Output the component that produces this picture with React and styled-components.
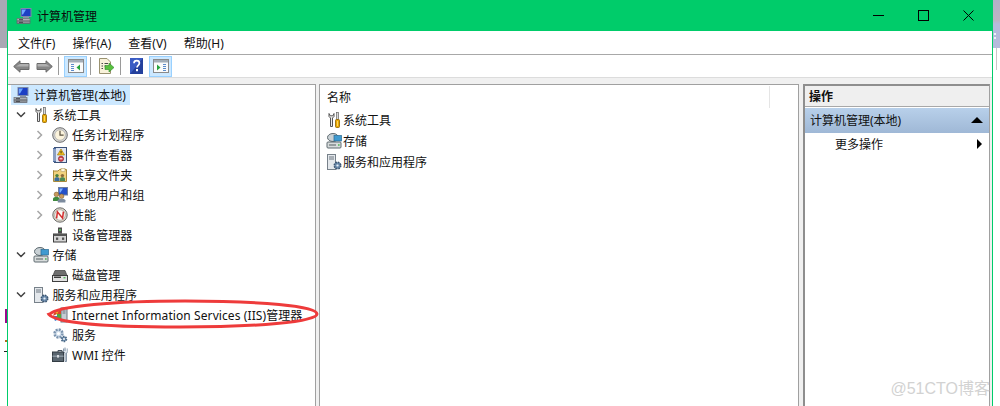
import React from "react";
import styled, { createGlobalStyle } from "styled-components";

const GlobalStyle = createGlobalStyle`
  html, body {
    margin: 0;
    padding: 0;
    height: 100%;
    background: #fff;
    overflow: hidden;
  }
  body {
    font-family: "Noto Sans", "Noto Sans CJK SC", sans-serif;
    font-size: 12px;
    color: #111;
  }
`;

const Page = styled.div`
  position: relative;
  display: flex;
  width: 1000px;
  height: 406px;
  overflow: hidden;
`;

const LeftStrip = styled.div`
  width: 7px;
  flex: none;
  display: flex;
  flex-direction: column;
  align-items: flex-end;
`;

const DesktopLeft = styled.div`
  width: 100%;
  height: 48px;
  background: #a9a8b4;
  margin-bottom: 261px;
`;

const Mark = styled.div`
  width: ${({ $w }) => $w}px;
  height: ${({ $h }) => $h}px;
  background: ${({ $c }) => $c};
  margin-bottom: ${({ $mb }) => $mb}px;
`;

const RightStrip = styled.div`
  width: 7px;
  flex: none;
`;

const DesktopRight = styled.div`
  height: 48px;
  box-sizing: border-box;
  padding: 33px 0 0 1px;
  display: flex;
  flex-direction: column;
  gap: 2px;
  background: linear-gradient(#b3b0c8 0, #bdb4c4 20px, #b6bbdc 24px);
`;

const Speck = styled.div`
  width: 2px;
  height: 2px;
  background: #eef0f8;
`;

const StripLine = styled.div`
  width: 1px;
  height: 22px;
  margin-left: 3px;
  background: #c8c8c8;
`;

const Window = styled.div`
  width: 986px;
  flex: none;
  box-sizing: border-box;
  border-left: 1px solid #00cc6a;
  border-right: 1px solid #00cc6a;
  display: flex;
  flex-direction: column;
  height: 406px;
  background: #fff;
`;

const TitleBar = styled.div`
  height: 31px;
  flex: none;
  margin: 0 -1px;
  background: #00cc6a;
  display: flex;
  align-items: center;
  padding-left: 9px;
  gap: 5px;
  color: #0a0a0a;
`;

const WinButtons = styled.div`
  margin-left: auto;
  margin-right: 2px;
  display: flex;
  align-items: center;
`;

const WinButton = styled.div`
  width: 45px;
  height: 31px;
  display: flex;
  align-items: center;
  justify-content: center;
`;

const MenuBar = styled.div`
  height: 23px;
  flex: none;
  display: flex;
  align-items: center;
  gap: 17px;
  padding-left: 10px;
  border-bottom: 1px solid #a8a8a8;
`;

const ToolBar = styled.div`
  height: 22px;
  flex: none;
  display: flex;
  align-items: center;
  padding-left: 5px;
  border-bottom: 1px solid #dcdcdc;
`;

const ToolIcon = styled.div`
  width: ${({ $w }) => $w || 16}px;
  height: 22px;
  margin-left: ${({ $ml }) => $ml || 0}px;
  display: flex;
  align-items: center;
  justify-content: center;
`;

const ToolSep = styled.div`
  width: 1px;
  height: 18px;
  background: #9a9a9a;
  margin-left: ${({ $ml }) => $ml}px;
`;

const ToolToggle = styled.div`
  width: 23px;
  height: 21px;
  box-sizing: border-box;
  margin-left: ${({ $ml }) => $ml}px;
  background: #cce8ff;
  border: 1px solid #99d1ff;
  display: flex;
  align-items: center;
  justify-content: center;
`;

const Panels = styled.div`
  flex: 1;
  min-height: 0;
  display: grid;
  grid-template-columns: 308px 480px 188px;
  column-gap: 3px;
  padding-top: 6px;
  background: #f0f0f0;
  align-items: stretch;
`;

const TreePanel = styled.div`
  background: #fff;
  border-top: 1px solid #a0a0a0;
  border-right: 1px solid #a0a0a0;
  padding: 0 0 0 3px;
`;

const TreeRow = styled.div`
  height: 20px;
  width: fit-content;
  display: flex;
  align-items: center;
  padding-left: ${({ $level }) => 2 + $level * 19.5}px;
  padding-right: 4px;
  letter-spacing: 0.09px;
  background: ${({ $selected }) => ($selected ? "#cce8ff" : "transparent")};
  white-space: nowrap;
`;

const Twisty = styled.div`
  width: 16px;
  height: 16px;
  margin-left: -20px;
  margin-right: 4px;
  display: flex;
  align-items: center;
  justify-content: center;
`;

const RowIcon = styled.div`
  width: 16px;
  height: 16px;
  flex: none;
  margin-right: ${({ $level }) => ($level === 0 ? 5 : 4)}px;
`;

const CenterPanel = styled.div`
  background: #fff;
  border: 1px solid #a0a0a0;
  border-bottom: 0;
`;

const ListHeader = styled.div`
  height: 24px;
  display: flex;
  align-items: center;
  padding-left: 7px;
  position: relative;
`;

const HeaderRule = styled.div`
  width: 1px;
  height: 22px;
  background: #e5e5e5;
  margin-left: auto;
  margin-right: 28px;
`;

const ListRows = styled.div`
  padding: 0 0 0 6px;
`;

const ListRow = styled.div`
  height: 21px;
  display: flex;
  align-items: center;
  gap: 1px;
`;

const ActionPanel = styled.div`
  margin-left: 1px;
  background: #fff;
  border-top: 2px solid #8e8e8e;
  border-left: 2px solid #8e8e8e;
  border-right: 1px solid #a0a0a0;
`;

const ActionHeader = styled.div`
  height: 20px;
  background: #efefef;
  border-bottom: 1px solid #a8a8a8;
  margin-bottom: 1px;
  display: flex;
  align-items: center;
  padding-left: 4px;
  font-weight: 700;
`;

const ActionGroup = styled.div`
  height: 25px;
  box-sizing: border-box;
  background: linear-gradient(#b8d0ea, #9fb8d6);
  display: flex;
  align-items: center;
  justify-content: space-between;
  padding: 0 6px 2px 5px;
`;

const ActionItem = styled.div`
  height: 22px;
  display: flex;
  align-items: center;
  justify-content: space-between;
  padding: 0 7px 0 30px;
`;

const UpArrow = styled.div`
  width: 0;
  height: 0;
  border-left: 6px solid transparent;
  border-right: 6px solid transparent;
  border-bottom: 6px solid #000;
`;

const RightArrow = styled.div`
  width: 0;
  height: 0;
  border-top: 5px solid transparent;
  border-bottom: 5px solid transparent;
  border-left: 5px solid #000;
`;

const Watermark = styled.div`
  position: absolute;
  right: 10px;
  bottom: 7px;
  font-family: "Liberation Sans", "Noto Sans CJK SC", sans-serif;
  font-size: 16px;
  line-height: 20px;
  color: #d2d2d2;
`;

const Ring = styled.svg`
  position: absolute;
  left: 45px;
  top: 297px;
  pointer-events: none;
`;

const Ico = ({ w = 16, h = 16, children }) => (
  <svg width={w} height={h} viewBox={`0 0 ${w} ${h}`} style={{ display: "block" }}>
    {children}
  </svg>
);

const ComputerIcon = () => (
  <Ico>
    <rect x="5" y="0.5" width="10" height="8" fill="#1c3fc4" stroke="#7c8aa8" />
    <path d="M6 1.5h4l-3 5H6z" fill="#6fa8ff" />
    <rect x="7" y="9" width="6" height="1.5" fill="#8a94a6" />
    <rect x="1" y="10.5" width="13" height="2.5" fill="#aeb2b8" stroke="#6c7077" strokeWidth="0.7" />
    <rect x="1" y="13" width="13" height="2.5" fill="#8d9197" stroke="#5e6268" strokeWidth="0.7" />
    <rect x="3" y="11.2" width="4" height="1" fill="#3f4348" />
    <rect x="3" y="13.8" width="4" height="1" fill="#3f4348" />
  </Ico>
);

const ToolsIcon = () => (
  <Ico>
    <path d="M3 1.5v3l1.5 1.5v8.5h2V6L8 4.5v-3L6.8 3.8H4.3z" fill="#e9e9e9" stroke="#555" strokeWidth="1" strokeLinejoin="round" />
    <rect x="10.5" y="0.5" width="2" height="7" fill="#d9d9d9" stroke="#666" strokeWidth="0.7" />
    <rect x="9.5" y="7.5" width="4" height="8" rx="1" fill="#e8a800" stroke="#8a5f00" strokeWidth="0.8" />
    <rect x="11" y="9" width="1" height="5" fill="#ffd860" />
  </Ico>
);

const ClockIcon = () => (
  <Ico>
    <circle cx="8" cy="8" r="7.3" fill="#d6d6d6" stroke="#6d6d6d" />
    <circle cx="8" cy="8" r="5.3" fill="#fbf3dc" stroke="#a8a8a8" strokeWidth="0.7" />
    <path d="M8 3.8V8.2H11.6" fill="none" stroke="#5a5240" strokeWidth="1.2" />
  </Ico>
);

const EventIcon = () => (
  <Ico>
    <rect x="2.5" y="0.5" width="12" height="15" fill="#dfe6f4" stroke="#3b5178" />
    <rect x="1" y="1" width="3" height="14" fill="#4f6c9e" />
    <path d="M1 3h3M1 5h3M1 7h3M1 9h3M1 11h3M1 13h3" stroke="#e8eef8" strokeWidth="0.8" />
    <path d="M9 2l3.6 6H5.4z" fill="#f4c21a" stroke="#96710a" strokeWidth="0.6" />
    <rect x="8.6" y="4" width="0.9" height="2.4" fill="#222" />
    <circle cx="9" cy="11.8" r="2.6" fill="#d8404c" stroke="#7c1c24" strokeWidth="0.6" />
    <path d="M7.6 11.8h2.8" stroke="#fff" strokeWidth="1" />
  </Ico>
);

const ShareIcon = () => (
  <Ico>
    <path d="M1.5 3.5V14.5H14.5V2.5H7.5L6 4H2z" fill="#f1d27d" stroke="#a88a3c" />
    <rect x="9" y="1.5" width="4" height="3" fill="#fdf6dc" stroke="#b9a468" strokeWidth="0.6" />
    <circle cx="5" cy="8.6" r="1.7" fill="#4b7f3c" />
    <path d="M2.5 14v-2.2c0-1 1-1.5 2.5-1.5s2.5.5 2.5 1.5V14z" fill="#3c6f9c" />
    <circle cx="10.4" cy="8.6" r="1.7" fill="#8c6b3a" />
    <path d="M8 14v-2.2c0-1 1-1.5 2.4-1.5s2.6.5 2.6 1.5V14z" fill="#4a8b55" />
  </Ico>
);

const UsersIcon = () => (
  <Ico>
    <rect x="6.5" y="0.5" width="9" height="7.5" fill="#2450c8" stroke="#6e7f9e" />
    <path d="M7.5 1.5h3.5l-2.5 4H7.5z" fill="#7fb2ff" />
    <circle cx="4.4" cy="7.4" r="2.3" fill="#c99a5c" stroke="#6e5127" strokeWidth="0.5" />
    <path d="M1 14v-2.4C1 10.5 2.4 10 4.4 10s3.2.5 3.2 1.6V14z" fill="#3f8a3e" />
    <circle cx="9.6" cy="9.2" r="2.3" fill="#c99a5c" stroke="#6e5127" strokeWidth="0.5" />
    <path d="M5.8 15.6v-2.3c0-1.1 1.6-1.6 3.8-1.6s3.8.5 3.8 1.6v2.3z" fill="#7c8b9e" />
  </Ico>
);

const PerfIcon = () => (
  <Ico>
    <circle cx="8" cy="8" r="7.2" fill="#ddd8c8" stroke="#6c6c6c" />
    <circle cx="8" cy="8" r="5.3" fill="#fbfaf4" stroke="#9c9c9c" strokeWidth="0.7" />
    <path d="M4.6 11.4L5.4 4.8L10.6 11.2L11.4 4.6" fill="none" stroke="#d22d2d" strokeWidth="1.5" />
  </Ico>
);

const DeviceIcon = () => (
  <Ico>
    <rect x="6" y="0.5" width="4" height="6" fill="#4d4d4d" />
    <rect x="7.2" y="2" width="1.6" height="2" fill="#58c060" />
    <rect x="1.5" y="7" width="13" height="8" fill="#d4d4d4" stroke="#3c3c3c" />
    <rect x="1.5" y="7" width="13" height="2" fill="#555" />
    <rect x="4" y="10.5" width="2.2" height="2.4" fill="#555" />
    <rect x="10" y="10.5" width="2.2" height="2.4" fill="#555" />
  </Ico>
);

const StorageIcon = () => (
  <Ico>
    <ellipse cx="7" cy="4.5" rx="5.5" ry="4" fill="#c8d0d4" stroke="#5e6a70" />
    <rect x="8" y="2.5" width="7.5" height="5.5" fill="#3f9ad0" stroke="#2a6a92" strokeWidth="0.7" />
    <rect x="1" y="9" width="14" height="6" rx="1" fill="#d8dcdc" stroke="#5e6a70" />
    <rect x="3" y="11.4" width="7" height="1.2" fill="#6a7478" />
    <rect x="12" y="11.2" width="1.6" height="1.6" fill="#54b85c" />
  </Ico>
);

const DiskIcon = () => (
  <Ico>
    <path d="M3 3.5H13L15 8.5H1z" fill="#6f6f6f" stroke="#3e3e3e" strokeWidth="0.7" />
    <rect x="0.5" y="8.5" width="15" height="6" fill="#e2e2e2" stroke="#3e3e3e" />
    <rect x="2" y="9.5" width="7" height="1.5" fill="#3e3e3e" />
    <rect x="11.5" y="10" width="2" height="1.4" fill="#58b860" />
  </Ico>
);

const ServerAppsIcon = () => (
  <Ico>
    <rect x="1.5" y="0.5" width="8" height="15" fill="#e4e8ec" stroke="#77818a" />
    <path d="M3 3h5M3 5h5" stroke="#6d7780" strokeWidth="1" />
    <circle cx="11.5" cy="11.5" r="3.2" fill="#6f8fb0" stroke="#3c5672" strokeWidth="1.6" strokeDasharray="1.6 0.9" />
    <circle cx="11.5" cy="11.5" r="1.1" fill="#e8f0f8" />
  </Ico>
);

const IisIcon = () => (
  <Ico>
    <rect x="9" y="1" width="6" height="14" fill="#c5ccd4" stroke="#6d7780" />
    <path d="M10.5 4h3M10.5 6h3" stroke="#6d7780" />
    <path d="M1 9a6 6 0 0 1 8-5v3H5z" fill="#d9482a" />
    <path d="M1 9h4v4l-2 1z" fill="#3a78cc" />
    <path d="M5 7h4v6H5z" fill="#55a63a" />
    <path d="M3 5l2 2 2-3z" fill="#e8b820" />
  </Ico>
);

const GearsIcon = () => (
  <Ico>
    <circle cx="6.5" cy="6.5" r="4" fill="#cfdcea" stroke="#7a93ae" strokeWidth="2.4" strokeDasharray="2 1.1" />
    <circle cx="6.5" cy="6.5" r="1.6" fill="#fff" />
    <circle cx="12" cy="12" r="2.4" fill="#6f8fb0" stroke="#4e6b88" strokeWidth="1.8" strokeDasharray="1.4 0.9" />
    <circle cx="12" cy="12" r="0.9" fill="#fff" />
  </Ico>
);

const WmiIcon = () => (
  <Ico>
    <path d="M6 5V3.5h4V5" fill="none" stroke="#44505c" />
    <rect x="0.5" y="5" width="11" height="9.5" fill="#5a6670" stroke="#333c44" />
    <rect x="0.5" y="8.5" width="11" height="1.5" fill="#8b97a2" />
    <rect x="5" y="8" width="2" height="2.6" fill="#d8dde2" />
    <path d="M13 0.5V4M11.5 1.5V4.5L13 6V14.5h1.5V6L16 4.5V1.5" fill="#dfe6ee" stroke="#6d8096" strokeWidth="0.8" />
  </Ico>
);

const ChevronRight = () => (
  <Ico w={8} h={10}>
    <path d="M1.5 1L5.5 5L1.5 9" fill="none" stroke="#a6a6a6" strokeWidth="1.5" />
  </Ico>
);

const ChevronDown = () => (
  <Ico w={10} h={8}>
    <path d="M1 1.5L5 5.5L9 1.5" fill="none" stroke="#404040" strokeWidth="1.5" />
  </Ico>
);

const ArrowLeft = () => (
  <Ico w={17} h={13}>
    <path d="M.7 6.5L7 .8V3.5H16V9.5H7v2.7z" fill="#868686" stroke="#6a6a6a" strokeLinejoin="round" />
    <path d="M7 4H15.5V6.5H3z" fill="#b0b0b0" />
  </Ico>
);

const ArrowRight = () => (
  <Ico w={17} h={13}>
    <path d="M16.3 6.5L10 .8V3.5H1V9.5h9v2.7z" fill="#868686" stroke="#6a6a6a" strokeLinejoin="round" />
    <path d="M10 4H1.5V6.5H14z" fill="#b0b0b0" />
  </Ico>
);

const PaneIcon = ({ side }) => (
  <Ico>
    <rect x="0.5" y="1.5" width="15" height="13" fill="#fbfbfb" stroke="#8a8a8a" />
    <rect x="1" y="2" width="14" height="2.5" fill="#a4aeb8" />
    {side === "left" ? (
      <>
        <path d="M3 6.5h3M3 8.5h3M3 10.5h3M3 12.5h3" stroke="#5b8ccc" />
        <path d="M12 6.5V12.5L8.5 9.5z" fill="#26a43c" />
      </>
    ) : (
      <>
        <path d="M10 6.5h3M10 8.5h3M10 10.5h3M10 12.5h3" stroke="#5b8ccc" />
        <path d="M4 6.5V12.5L7.5 9.5z" fill="#26a43c" />
      </>
    )}
  </Ico>
);

const ExportIcon = () => (
  <Ico>
    <path d="M1.5.5H9L12.5 4V15.5H1.5z" fill="#f8f2da" stroke="#9a9270" />
    <path d="M3.5 5.5H5M3.5 8H5M3.5 10.5H5M6.5 5.5H10M6.5 8H8" stroke="#4a4a4a" />
    <path d="M7 7.5h4V5l5 4.5-5 4.5v-2.5H7z" fill="#58c03e" stroke="#2e8a28" strokeWidth="0.6" />
  </Ico>
);

const HelpIcon = () => (
  <Ico w={13} h={16}>
    <rect width="13" height="16" fill="#24409c" />
    <path d="M0 0h13L0 16z" fill="#3a5cc4" />
    <path
      d="M4 5.2C4 3.4 5.2 2.6 6.7 2.6S9.4 3.5 9.4 5.1C9.4 7.3 7 7.4 7 9.6"
      fill="none"
      stroke="#fff"
      strokeWidth="1.7"
    />
    <rect x="6" y="11" width="2" height="2.2" fill="#fff" />
  </Ico>
);

const treeRows = [
  { level: 0, label: "计算机管理(本地)", Icon: ComputerIcon, selected: true },
  { level: 1, label: "系统工具", Icon: ToolsIcon, twisty: "down" },
  { level: 2, label: "任务计划程序", Icon: ClockIcon, twisty: "right" },
  { level: 2, label: "事件查看器", Icon: EventIcon, twisty: "right" },
  { level: 2, label: "共享文件夹", Icon: ShareIcon, twisty: "right" },
  { level: 2, label: "本地用户和组", Icon: UsersIcon, twisty: "right" },
  { level: 2, label: "性能", Icon: PerfIcon, twisty: "right" },
  { level: 2, label: "设备管理器", Icon: DeviceIcon },
  { level: 1, label: "存储", Icon: StorageIcon, twisty: "down" },
  { level: 2, label: "磁盘管理", Icon: DiskIcon },
  { level: 1, label: "服务和应用程序", Icon: ServerAppsIcon, twisty: "down" },
  { level: 2, label: "Internet Information Services (IIS)管理器", Icon: IisIcon },
  { level: 2, label: "服务", Icon: GearsIcon },
  { level: 2, label: "WMI 控件", Icon: WmiIcon },
];

const listRows = [
  { label: "系统工具", Icon: ToolsIcon },
  { label: "存储", Icon: StorageIcon },
  { label: "服务和应用程序", Icon: ServerAppsIcon },
];

const menus = ["文件(F)", "操作(A)", "查看(V)", "帮助(H)"];

function App() {
  return (
    <Page>
      <GlobalStyle />
      <LeftStrip>
        <DesktopLeft />
        <Mark $w={2} $h={14} $c="#9a0a8a" $mb={17} />
        <Mark $w={2} $h={2} $c="#b06a20" $mb={9} />
        <Mark $w={3} $h={1} $c="#222" $mb={0} />
      </LeftStrip>

      <Window>
        <TitleBar>
          <ComputerIcon />
          计算机管理
          <WinButtons>
            <WinButton>
              <Ico w={11} h={11}>
                <path d="M0 5.5H11" stroke="#000" />
              </Ico>
            </WinButton>
            <WinButton>
              <Ico w={11} h={11}>
                <rect x="0.5" y="0.5" width="10" height="10" fill="none" stroke="#000" />
              </Ico>
            </WinButton>
            <WinButton>
              <Ico w={11} h={11}>
                <path d="M.5.5L10.5 10.5M10.5.5L.5 10.5" stroke="#000" />
              </Ico>
            </WinButton>
          </WinButtons>
        </TitleBar>

        <MenuBar>
          {menus.map((m) => (
            <span key={m}>{m}</span>
          ))}
        </MenuBar>

        <ToolBar>
          <ToolIcon $w={17}>
            <ArrowLeft />
          </ToolIcon>
          <ToolIcon $w={17} $ml={6}>
            <ArrowRight />
          </ToolIcon>
          <ToolSep $ml={5} />
          <ToolToggle $ml={5}>
            <PaneIcon side="left" />
          </ToolToggle>
          <ToolSep $ml={3} />
          <ToolIcon $ml={7}>
            <ExportIcon />
          </ToolIcon>
          <ToolSep $ml={6} />
          <ToolIcon $w={13} $ml={9}>
            <HelpIcon />
          </ToolIcon>
          <ToolToggle $ml={6}>
            <PaneIcon side="right" />
          </ToolToggle>
        </ToolBar>

        <Panels>
          <TreePanel>
            {treeRows.map(({ level, label, Icon, selected, twisty }) => (
              <TreeRow key={label} $level={level} $selected={selected}>
                {level > 0 && (
                  <Twisty>
                    {twisty === "down" && <ChevronDown />}
                    {twisty === "right" && <ChevronRight />}
                  </Twisty>
                )}
                <RowIcon $level={level}>
                  <Icon />
                </RowIcon>
                <span>{label}</span>
              </TreeRow>
            ))}
          </TreePanel>

          <CenterPanel>
            <ListHeader>
              名称
              <HeaderRule />
            </ListHeader>
            <ListRows>
              {listRows.map(({ label, Icon }) => (
                <ListRow key={label}>
                  <Icon />
                  <span>{label}</span>
                </ListRow>
              ))}
            </ListRows>
          </CenterPanel>

          <ActionPanel>
            <ActionHeader>操作</ActionHeader>
            <ActionGroup>
              计算机管理(本地)
              <UpArrow />
            </ActionGroup>
            <ActionItem>
              更多操作
              <RightArrow />
            </ActionItem>
          </ActionPanel>
        </Panels>
      </Window>

      <RightStrip>
        <DesktopRight>
          <Speck />
          <Speck />
        </DesktopRight>
        <StripLine />
      </RightStrip>

      <Watermark>@51CTO博客</Watermark>
      <Ring width="276" height="34" viewBox="0 0 276 34">
        <path
          d="M5 17C12 9 70 4 140 4C215 4 272 9 272 17C272 25 210 30 135 30C60 30 6 26 3 16"
          fill="none"
          stroke="#ee3b3b"
          strokeWidth="3"
        />
      </Ring>
    </Page>
  );
}

export default App;
